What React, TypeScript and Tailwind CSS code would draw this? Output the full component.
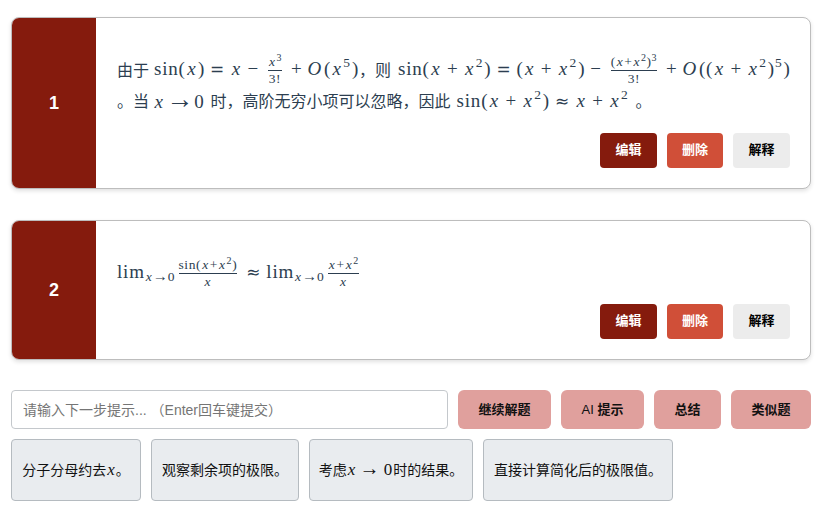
import type { ReactNode } from "react";

const X = () => <i className="mx-[1.5px]">x</i>;
const Sup = ({ children }: { children: ReactNode }) => (
  <sup className="relative top-[-8px] mr-[1px] align-baseline text-[13.5px] leading-none">{children}</sup>
);
const Op = ({ children }: { children: ReactNode }) => <span className="mx-[5px]">{children}</span>;
const Rel = ({ children }: { children: ReactNode }) => (
  <span className="mx-[5px] font-['DejaVu_Sans',sans-serif] text-[17px]">{children}</span>
);
const Arrow = () => <span className="mx-[1px] text-[27px] leading-none tracking-normal">→</span>;
const Fx = () => <i className="mx-[1px]">x</i>;
const O = () => <i className="mr-[2px]">O</i>;
const Frac = ({ top, bottom }: { top: ReactNode; bottom: ReactNode }) => (
  <span className="mx-[4px] inline-flex flex-col items-center align-middle text-[13.5px] leading-[14px] tracking-[0.5px]">
    <span className="border-b border-[#2c3e50] pb-[1px] whitespace-nowrap">{top}</span>
    <span className="pt-[1px] whitespace-nowrap">{bottom}</span>
  </span>
);
const FracL = ({ top, bottom }: { top: ReactNode; bottom: ReactNode }) => (
  <span className="mx-[4px] inline-flex flex-col items-center align-middle text-[13.5px] leading-[14px] tracking-[0.6px]">
    <span className="border-b border-[#2c3e50] pb-[1px] whitespace-nowrap">{top}</span>
    <span className="pt-[1px] whitespace-nowrap">{bottom}</span>
  </span>
);
const M = ({ children, c }: { children: ReactNode; c: string }) => (
  <span className={`font-['Liberation_Serif',serif] text-[19px] tracking-[0.8px] whitespace-nowrap ${c}`}>{children}</span>
);
const S = ({ children }: { children: ReactNode }) => <sup className="relative top-[-5px] align-baseline text-[10px] leading-none">{children}</sup>;
const Lim = () => (
  <span>
    lim<sub className="relative top-[3px] align-baseline text-[13.5px] leading-none tracking-normal"><Fx /><span className="text-[15px] leading-none">→</span>0</sub>
  </span>
);

function Card({ n, children, h }: { n: number; children: ReactNode; h: string }) {
  return (
    <div className={`flex overflow-hidden rounded-lg border border-[#bdbdbd] bg-white shadow-[0_2px_4px_rgba(0,0,0,0.12)] ${h}`}>
      <div className="flex w-[84px] shrink-0 items-center justify-center bg-[#851b0d] pt-[1px] text-[18px] font-bold text-white">{n}</div>
      <div className="flex min-w-0 flex-1 flex-col justify-between pt-[36px] pr-[20px] pb-[20px] pl-[21px]">
        <div className="text-[16px] text-[#2c3e50]">{children}</div>
        <div className="flex justify-end gap-[10px] text-[13px] font-bold">
          <button className="h-[35px] w-[57px] rounded bg-[#851b0d] text-white">编辑</button>
          <button className="h-[35px] w-[56px] rounded bg-[#d04f38] text-white">删除</button>
          <button className="h-[35px] w-[57px] rounded bg-[#ececec] text-black">解释</button>
        </div>
      </div>
    </div>
  );
}

const Pink = ({ w, children }: { w: string; children: ReactNode }) => (
  <button className={`h-[39px] rounded-md bg-[#e0a09d] text-[13px] font-bold text-[#111] ${w}`}>{children}</button>
);
const Chip = ({ w, children }: { w: string; children: ReactNode }) => (
  <div className={`flex h-[62px] items-center justify-center rounded border border-[#b5bbc0] bg-[#e9ecef] text-[14px] text-[#111] ${w}`}>{children}</div>
);

export default function App() {
  return (
    <div className="flex w-[811px] flex-col pt-[17px] pl-[11px] font-['Liberation_Sans','Noto_Sans_CJK_SC',sans-serif]">
      <Card n={1} h="h-[171.5px]">
        <div className="flex h-[33px] items-center whitespace-nowrap">
          由于
          <M c="ml-[5px]">
            sin(<X />)<Rel>=</Rel><X /><Op>−</Op>
            <Frac top={<><Fx /><S>3</S></>} bottom="3!" />
            <Op>+</Op><O />(<X /><Sup>5</Sup>)
          </M>
          ，则
          <M c="ml-[7px]">
            sin(<X /><Op>+</Op><X /><Sup>2</Sup>)<Rel>=</Rel>(<X /><Op>+</Op><X /><Sup>2</Sup>)<Op>−</Op>
            <Frac top={<>(<Fx />+<Fx /><S>2</S>)<S>3</S></>} bottom="3!" />
            <Op>+</Op><O />((<X /><Op>+</Op><X /><Sup>2</Sup>)<Sup>5</Sup>)
          </M>
        </div>
        <div className="flex h-[29px] items-center whitespace-nowrap">
          。当
          <M c="mr-[6px] ml-[4px]"><X /><Arrow />0</M>
          时，高阶无穷小项可以忽略，因此
          <M c="mx-[6px]">sin(<X /><Op>+</Op><X /><Sup>2</Sup>)<Rel>≈</Rel><X /><Op>+</Op><X /><Sup>2</Sup></M>。
        </div>
      </Card>
      <div className="mt-[31px]">
        <Card n={2} h="h-[140px]">
          <div className="-mt-[3px] flex h-[40px] items-center whitespace-nowrap">
            <M c="">
              <Lim />
              <FracL top={<>sin(<Fx />+<Fx /><S>2</S>)</>} bottom={<Fx />} />
              <Rel>≈</Rel>
              <Lim />
              <FracL top={<><Fx />+<Fx /><S>2</S></>} bottom={<Fx />} />
            </M>
          </div>
        </Card>
      </div>
      <div className="mt-[30.5px] flex gap-[10px]">
        <input
          readOnly
          placeholder="请输入下一步提示... （Enter回车键提交）"
          className="h-[39px] w-[437px] rounded border border-[#c4c8cc] bg-white px-[11px] text-[14px] placeholder:text-[#757575]"
        />
        <Pink w="w-[93px]">继续解题</Pink>
        <Pink w="w-[83px]"><span className="font-medium">AI</span> 提示</Pink>
        <Pink w="w-[67px]">总结</Pink>
        <Pink w="w-[80px]">类似题</Pink>
      </div>
      <div className="mt-[10px] flex gap-[10px]">
        <Chip w="w-[130px]"><span>分子分母约去<i className="mx-[1px] font-['Liberation_Serif',serif] text-[17px]">x</i>。</span></Chip>
        <Chip w="w-[148px]">观察剩余项的极限。</Chip>
        <Chip w="w-[164px]"><span>考虑<span className="mx-[1px] font-['Liberation_Serif',serif] text-[17px]"><i>x</i> <span className="text-[20px] leading-none">→</span> 0</span>时的结果。</span></Chip>
        <Chip w="w-[190px]">直接计算简化后的极限值。</Chip>
      </div>
    </div>
  );
}
